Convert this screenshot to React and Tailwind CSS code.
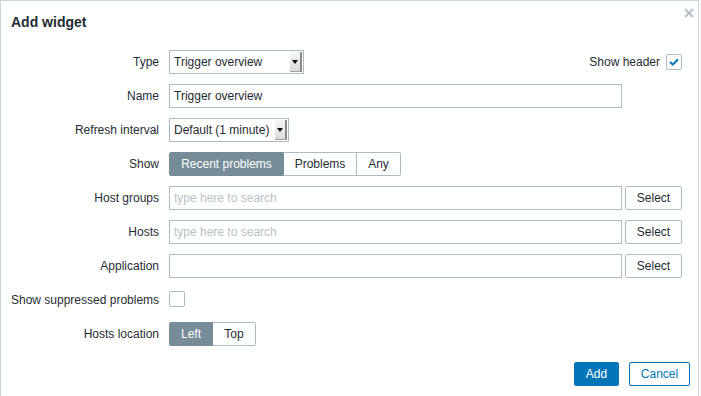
import React from "react";

function Label({ children }) {
  return <div className="w-[148px] shrink-0 text-right mr-[10px] whitespace-nowrap">{children}</div>;
}

function Select({ value, width }) {
  return (
    <div className={`h-[24px] ${width} border border-[#acbbc2] bg-white flex items-center relative`}>
      <span className="pl-[4px] flex-1 whitespace-nowrap">{value}</span>
      <div className="h-[20px] w-[12px] mr-[1px] bg-gradient-to-b from-[#f6f6f6] to-[#dcdcdc] border-r-2 border-b border-r-[#8a8a8a] border-b-[#a0a0a0] flex items-center justify-center">
        <svg width="6" height="4" viewBox="0 0 6 4"><path d="M0 0 L6 0 L3 4 Z" fill="#111" /></svg>
      </div>
    </div>
  );
}

function Seg({ items }) {
  return (
    <div className="flex h-[24px]">
      {items.map((it, i) => (
        <div
          key={it.t}
          className={`${it.w} h-[24px] flex items-center justify-center border ${
            it.on ? "bg-[#768d99] border-[#768d99] text-white" : "bg-white border-[#acbbc2] text-[#1f2c33]"
          } ${i === 0 ? "rounded-l-[2px]" : "border-l-0"} ${i === items.length - 1 ? "rounded-r-[2px]" : ""}`}
        >
          {it.t}
        </div>
      ))}
    </div>
  );
}

function TextInput({ value, placeholder }) {
  return (
    <div className="w-[453px] h-[24px] border border-[#acbbc2] bg-white flex items-center pl-[4px]">
      {value ? <span>{value}</span> : <span className="text-[#b8c2c7]">{placeholder}</span>}
    </div>
  );
}

function SelectBtn() {
  return (
    <div className="ml-[3px] w-[57px] h-[24px] border border-[#acbbc2] rounded-[2px] bg-white flex items-center justify-center">
      Select
    </div>
  );
}

export default function App() {
  return (
    <div className="w-[701px] h-[396px] bg-white font-['Liberation_Sans',Arial,sans-serif] text-[12px] text-[#1f2c33] overflow-hidden">
      <div className="w-[699px] h-[400px] border-l border-t border-r border-[#ccd5d9] flex flex-col">
        <div className="h-[41px] flex justify-between pl-[10px] pr-[4px]">
          <div className="text-[14px] font-bold self-center mt-[2px]">Add widget</div>
          <svg className="mt-[7px]" width="10" height="10" viewBox="0 0 10 10">
            <path d="M1 1 L9 9 M9 1 L1 9" stroke="#b3c0c7" strokeWidth="2" />
          </svg>
        </div>
        <div className="pt-[8px] pl-[10px] pr-[16px] flex flex-col gap-[10px]">
          <div className="flex items-center h-[24px]">
            <Label>Type</Label>
            <Select value="Trigger overview" width="w-[135px]" />
            <div className="flex-1" />
            <span className="mr-[6px]">Show header</span>
            <div className="w-[16px] h-[16px] border border-[#acbbc2] rounded-[2px] flex items-center justify-center">
              <svg width="10" height="8" viewBox="0 0 10 8">
                <path d="M1 4 L3.8 6.6 L9 1.2" stroke="#0275b8" strokeWidth="2" fill="none" />
              </svg>
            </div>
          </div>
          <div className="flex items-center h-[24px]">
            <Label>Name</Label>
            <TextInput value="Trigger overview" />
          </div>
          <div className="flex items-center h-[24px]">
            <Label>Refresh interval</Label>
            <Select value="Default (1 minute)" width="w-[120px]" />
          </div>
          <div className="flex items-center h-[24px]">
            <Label>Show</Label>
            <Seg
              items={[
                { t: "Recent problems", w: "w-[115px]", on: true },
                { t: "Problems", w: "w-[73px]" },
                { t: "Any", w: "w-[44px]" },
              ]}
            />
          </div>
          <div className="flex items-center h-[24px]">
            <Label>Host groups</Label>
            <TextInput placeholder="type here to search" />
            <SelectBtn />
          </div>
          <div className="flex items-center h-[24px]">
            <Label>Hosts</Label>
            <TextInput placeholder="type here to search" />
            <SelectBtn />
          </div>
          <div className="flex items-center h-[24px]">
            <Label>Application</Label>
            <TextInput placeholder="" />
            <SelectBtn />
          </div>
          <div className="flex items-center h-[24px]">
            <Label>Show suppressed problems</Label>
            <div className="w-[16px] h-[16px] border border-[#acbbc2] rounded-[2px] -mt-[2px]" />
          </div>
          <div className="flex items-center h-[24px]">
            <Label>Hosts location</Label>
            <Seg
              items={[
                { t: "Left", w: "w-[44px]", on: true },
                { t: "Top", w: "w-[43px]" },
              ]}
            />
          </div>
        </div>
        <div className="flex justify-end pr-[8px] mt-[16px] gap-[10px]">
          <div className="w-[45px] h-[24px] bg-[#0275b8] border border-[#0275b8] rounded-[2px] text-white flex items-center justify-center">
            Add
          </div>
          <div className="w-[61px] h-[24px] bg-white border border-[#0275b8] rounded-[2px] text-[#0275b8] flex items-center justify-center">
            Cancel
          </div>
        </div>
      </div>
    </div>
  );
}
